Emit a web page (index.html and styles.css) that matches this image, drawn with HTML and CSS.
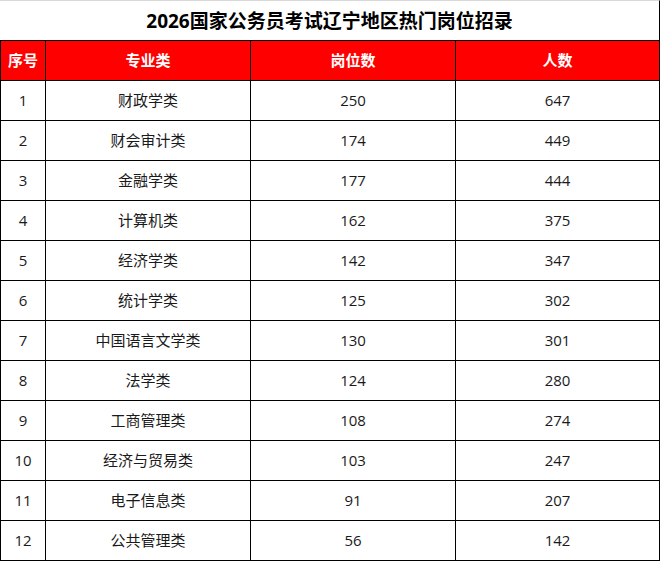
FILE: index.html
```html
<!DOCTYPE html>
<html lang="zh-CN">
<head>
<meta charset="utf-8">
<title>2026国家公务员考试辽宁地区热门岗位招录</title>
<link rel="stylesheet" href="styles.css">
</head>
<body>
<div class="sheet">
  <div class="title">2026国家公务员考试辽宁地区热门岗位招录</div>
  <div class="row head">
    <div class="cell c1">序号</div><div class="cell">专业类</div><div class="cell">岗位数</div><div class="cell">人数</div>
  </div>
  <div class="row"><div class="cell c1">1</div><div class="cell">财政学类</div><div class="cell">250</div><div class="cell">647</div></div>
  <div class="row"><div class="cell c1">2</div><div class="cell">财会审计类</div><div class="cell">174</div><div class="cell">449</div></div>
  <div class="row"><div class="cell c1">3</div><div class="cell">金融学类</div><div class="cell">177</div><div class="cell">444</div></div>
  <div class="row"><div class="cell c1">4</div><div class="cell">计算机类</div><div class="cell">162</div><div class="cell">375</div></div>
  <div class="row"><div class="cell c1">5</div><div class="cell">经济学类</div><div class="cell">142</div><div class="cell">347</div></div>
  <div class="row"><div class="cell c1">6</div><div class="cell">统计学类</div><div class="cell">125</div><div class="cell">302</div></div>
  <div class="row"><div class="cell c1">7</div><div class="cell">中国语言文学类</div><div class="cell">130</div><div class="cell">301</div></div>
  <div class="row"><div class="cell c1">8</div><div class="cell">法学类</div><div class="cell">124</div><div class="cell">280</div></div>
  <div class="row"><div class="cell c1">9</div><div class="cell">工商管理类</div><div class="cell">108</div><div class="cell">274</div></div>
  <div class="row"><div class="cell c1">10</div><div class="cell">经济与贸易类</div><div class="cell">103</div><div class="cell">247</div></div>
  <div class="row"><div class="cell c1">11</div><div class="cell">电子信息类</div><div class="cell">91</div><div class="cell">207</div></div>
  <div class="row"><div class="cell c1">12</div><div class="cell">公共管理类</div><div class="cell">56</div><div class="cell">142</div></div>
</div>
</body>
</html>
```
FILE: styles.css
```css
html, body {
  margin: 0;
  padding: 0;
  background: #ffffff;
}
body {
  font-family: "Open Sans", "Noto Sans CJK SC", sans-serif;
  color: #1a1a1a;
}
.sheet {
  width: 660px;
  display: flex;
  flex-direction: column;
}
.title {
  box-sizing: border-box;
  height: 41px;
  padding-bottom: 1px;
  border-top: 1px solid #d9d9d9;
  border-right: 1px solid #000;
  border-bottom: 1px solid #000;
  display: flex;
  align-items: center;
  justify-content: center;
  font-family: "Open Sans", "Noto Sans CJK SC", sans-serif;
  font-weight: 700;
  font-size: 19px;
  color: #000;
}
.row {
  display: grid;
  grid-template-columns: 46px 205px 205px 204px;
  height: 40px;
}
.cell {
  box-sizing: border-box;
  padding-bottom: 2px;
  border-right: 1px solid #000;
  border-bottom: 1px solid #000;
  display: flex;
  align-items: center;
  justify-content: center;
  font-size: 15px;
}
.c1 {
  border-left: 1px solid #000;
}
.head .cell {
  background: #ff0000;
  color: #ffffff;
  font-weight: 700;
}
```
